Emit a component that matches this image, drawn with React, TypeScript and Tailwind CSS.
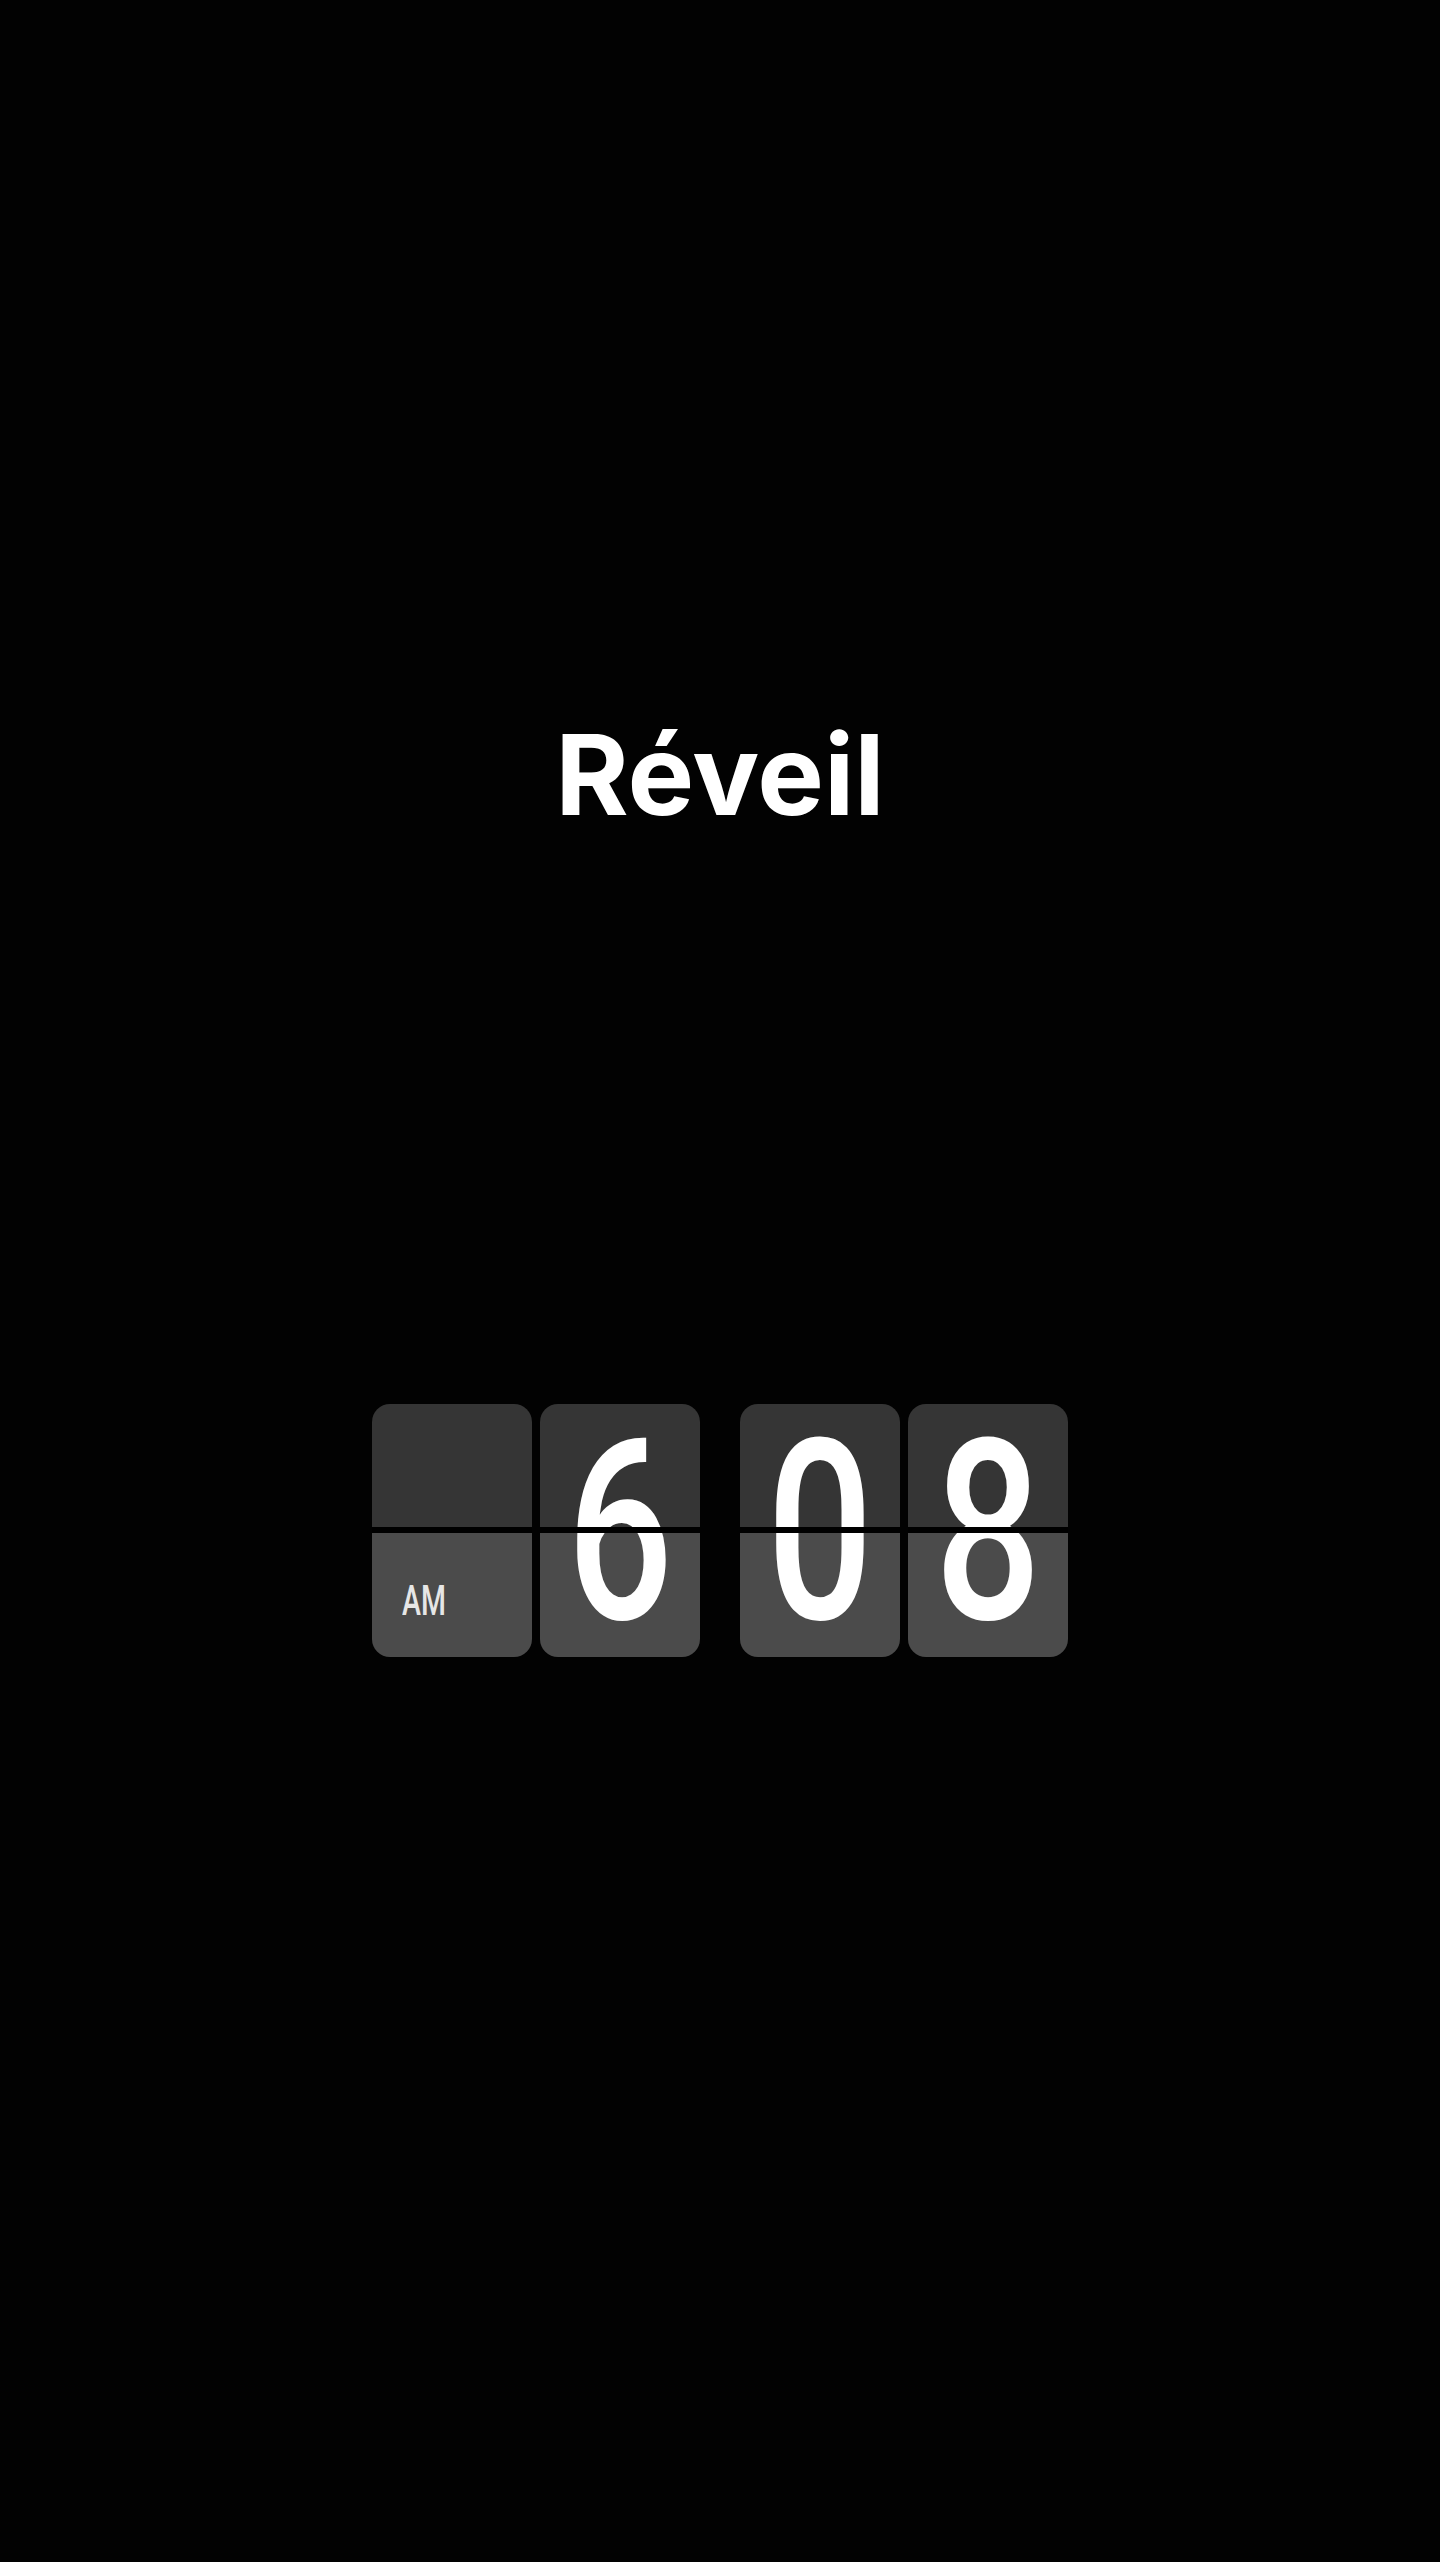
import React from "react";

function FlipCard({ digit, am }: { digit?: string; am?: boolean }) {
  return (
    <div className="relative w-[160px] h-[253px]">
      <div className="flex h-full flex-col">
        <div className="h-[123px] rounded-t-[18px] bg-[#353535]" />
        <div className="h-[6px] bg-black" />
        <div className="flex h-[124px] items-end rounded-b-[18px] bg-[#4b4b4b] pb-[35px] pl-[30px]">
          {am && (
            <span className="inline-block origin-left scale-x-[0.68] text-[42px] font-medium leading-none text-[#e6e6e6] [font-family:Roboto,'Liberation_Sans',sans-serif]">
              AM
            </span>
          )}
        </div>
      </div>
      {digit && (
        <div className="absolute inset-0 flex items-center justify-center">
          <span className="inline-block translate-y-[2px] scale-x-[0.74] text-[253px] font-medium leading-none text-white [font-family:Roboto,'Liberation_Sans',sans-serif]">
            {digit}
          </span>
        </div>
      )}
      <div className="absolute left-0 right-0 top-[123px] h-[6px] bg-black" />
    </div>
  );
}

export default function App() {
  return (
    <div className="flex min-h-[2562px] w-full flex-col items-center bg-[#020202] pt-[718px]">
      <h1 className="text-[112px] font-bold leading-none text-white [font-family:Inter,'Noto_Sans',sans-serif]">
        Réveil
      </h1>
      <div className="mt-[574px] flex items-center gap-[40px]">
        <div className="flex gap-[8px]">
          <FlipCard am />
          <FlipCard digit="6" />
        </div>
        <div className="flex gap-[8px]">
          <FlipCard digit="0" />
          <FlipCard digit="8" />
        </div>
      </div>
    </div>
  );
}
